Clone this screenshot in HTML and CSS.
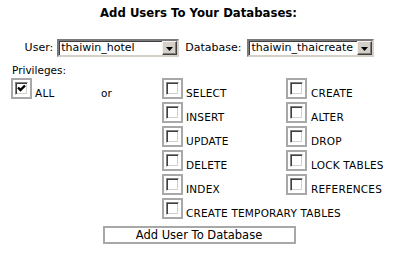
FILE: index.html
```html
<!DOCTYPE html>
<html>
<head>
<meta charset="utf-8">
<link rel="stylesheet" href="styles.css">
</head>
<body>
<div class="page">
  <h1 class="title">Add Users To Your Databases:</h1>
  <div class="pickers">
    <span class="field-label">User:</span>
    <span class="select-wrap user-select">
      <select class="select"><option>thaiwin_hotel</option></select>
      <span class="arrow"><svg width="7" height="4" viewBox="0 0 7 4"><path d="M0 0H7L3.5 4Z" fill="#000"/></svg></span>
    </span>
    <span class="field-label db-label">Database:</span>
    <span class="select-wrap db-select">
      <select class="select"><option>thaiwin_thaicreate</option></select>
      <span class="arrow"><svg width="7" height="4" viewBox="0 0 7 4"><path d="M0 0H7L3.5 4Z" fill="#000"/></svg></span>
    </span>
  </div>
  <div class="priv-title">Privileges:</div>
  <div class="priv-grid">
    <label class="opt all"><span class="cb-outer"><span class="cb"><svg width="9" height="9" viewBox="0 0 9 9"><path d="M1 3.5L3.5 6L8 1.5" fill="none" stroke="#000" stroke-width="2.4"/></svg></span></span><span class="opt-text">ALL</span></label>
    <span class="or">or</span>
    <label class="opt c1"><span class="cb-outer"><span class="cb"></span></span><span class="opt-text">SELECT</span></label>
    <label class="opt c2"><span class="cb-outer"><span class="cb"></span></span><span class="opt-text">CREATE</span></label>
    <label class="opt c1"><span class="cb-outer"><span class="cb"></span></span><span class="opt-text">INSERT</span></label>
    <label class="opt c2"><span class="cb-outer"><span class="cb"></span></span><span class="opt-text">ALTER</span></label>
    <label class="opt c1"><span class="cb-outer"><span class="cb"></span></span><span class="opt-text">UPDATE</span></label>
    <label class="opt c2"><span class="cb-outer"><span class="cb"></span></span><span class="opt-text">DROP</span></label>
    <label class="opt c1"><span class="cb-outer"><span class="cb"></span></span><span class="opt-text">DELETE</span></label>
    <label class="opt c2"><span class="cb-outer"><span class="cb"></span></span><span class="opt-text">LOCK TABLES</span></label>
    <label class="opt c1"><span class="cb-outer"><span class="cb"></span></span><span class="opt-text">INDEX</span></label>
    <label class="opt c2"><span class="cb-outer"><span class="cb"></span></span><span class="opt-text">REFERENCES</span></label>
    <label class="opt c1 wide"><span class="cb-outer"><span class="cb"></span></span><span class="opt-text">CREATE TEMPORARY TABLES</span></label>
  </div>
  <div class="actions">
    <button class="btn" type="button">Add User To Database</button>
  </div>
</div>
</body>
</html>
```

FILE: styles.css
```css
html, body {
  margin: 0;
  padding: 0;
  background: #fff;
}
body {
  font-family: "DejaVu Sans", Verdana, sans-serif;
  color: #000;
}
.page {
  width: 397px;
  padding-top: 5px;
}
.title {
  margin: 0;
  text-align: center;
  font-size: 11.7px;
  font-weight: bold;
  line-height: 16px;
}
.pickers {
  margin-top: 18px;
  display: flex;
  justify-content: center;
  align-items: center;
  height: 18px;
  padding-left: 2px;
}
.field-label {
  font-size: 11px;
  line-height: 18px;
  margin-right: 4px;
}
.db-label {
  margin-left: 6px;
  margin-right: 6px;
}
.select-wrap {
  position: relative;
  display: block;
  height: 18px;
}
.user-select { width: 122px; }
.db-select { width: 127px; }
.select {
  -webkit-appearance: none;
  appearance: none;
  display: block;
  box-sizing: border-box;
  width: 100%;
  height: 18px;
  margin: 0;
  padding: 0 17px 0 2px;
  font-family: "DejaVu Sans", Verdana, sans-serif;
  font-size: 11px;
  line-height: 14px;
  color: #000;
  background: #fff;
  border-style: solid;
  border-width: 2px;
  border-color: #7a7a7a #d4d0c8 #d4d0c8 #7a7a7a;
  box-shadow: inset 1px 1px 0 #404040;
  border-radius: 0;
  outline: none;
}
.arrow {
  position: absolute;
  right: 2px;
  top: 2px;
  width: 15px;
  height: 14px;
  box-sizing: border-box;
  background: #d4d0c8;
  border-style: solid;
  border-width: 1px;
  border-color: #f4f3ee #404040 #404040 #f4f3ee;
  box-shadow: inset -1px -1px 0 #808080;
  display: flex;
  align-items: center;
  justify-content: center;
}
.arrow svg { display: block; margin-top: 1px; }
.priv-title {
  margin-top: 7px;
  padding-left: 12px;
  font-size: 10.5px;
  line-height: 12px;
}
.priv-grid {
  margin-top: 2px;
  padding-left: 11px;
  display: grid;
  grid-template-columns: 90px 61px 124px 1fr;
  grid-auto-rows: 24px;
  align-items: start;
}
.opt {
  display: flex;
  align-items: flex-end;
  font-size: 10.5px;
}
.opt.c1 { grid-column: 3; }
.opt.c2 { grid-column: 4; }
.opt.wide { grid-column: 3 / span 2; }
.opt.all { grid-column: 1; grid-row: 1; }
.or {
  grid-column: 2;
  grid-row: 1;
  font-size: 10.5px;
  line-height: 12px;
  padding-top: 9px;
}
.opt-text {
  line-height: 12px;
  margin-left: 3px;
  letter-spacing: 0.2px;
}
.c2 .opt-text { margin-left: 4px; }
.cb-outer {
  display: flex;
  align-items: center;
  justify-content: center;
  box-sizing: border-box;
  width: 21px;
  height: 21px;
  border: 2px solid #a8a8a8;
  background: #fff;
  flex: none;
}
.cb {
  display: flex;
  align-items: center;
  justify-content: center;
  box-sizing: border-box;
  width: 13px;
  height: 13px;
  background: #fff;
  border-style: solid;
  border-width: 1px;
  border-color: #808080 #fff #fff #808080;
  box-shadow: inset 1px 1px 0 #404040, inset -1px -1px 0 #d4d0c8;
}
.cb svg { display: block; }
.actions {
  display: flex;
  justify-content: center;
  margin-top: 4px;
  padding-left: 1px;
}
.btn {
  box-sizing: border-box;
  width: 193px;
  height: 18px;
  margin: 0;
  padding: 0;
  background: #fff;
  border: 2px solid #a8a8a8;
  border-radius: 0;
  font-family: "DejaVu Sans", Verdana, sans-serif;
  font-size: 11.5px;
  line-height: 14px;
  color: #000;
}
```
